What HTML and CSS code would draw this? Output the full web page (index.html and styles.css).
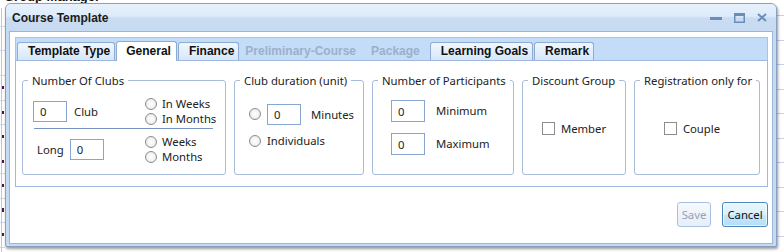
FILE: index.html
```html
<!DOCTYPE html>
<html lang="en">
<head>
    <meta charset="UTF-8">
    <title>Course Template</title>
    <link rel="stylesheet" href="styles.css">
</head>
<body>
    <div class="backdrop">
        <div class="backdrop-title">Group Manager</div>
        <div class="backdrop-left"></div>
        <div class="backdrop-marks"></div>
        <div class="backdrop-right"></div>
    </div>

    <div class="window">
        <div class="titlebar">
            <span class="title">Course Template</span>
            <div class="controls">
                <svg class="ctl" width="12" height="10" viewBox="0 0 12 10"><rect x="0" y="4" width="12" height="3"/></svg>
                <svg class="ctl" width="11" height="10" viewBox="0 0 11 10"><rect x="0" y="0" width="11" height="3"/><rect x="0.75" y="0.75" width="9.5" height="8.5" fill="none" stroke-width="1.5"/></svg>
                <svg class="ctl" width="10" height="9" viewBox="0 0 10 9"><path d="M1 1L9 8M9 1L1 8" fill="none" stroke-width="2"/></svg>
            </div>
        </div>

        <div class="panel">
            <div class="tabs">
                <div class="tab">Template Type</div>
                <div class="tab active">General</div>
                <div class="tab">Finance</div>
                <div class="tab disabled">Preliminary-Course</div>
                <div class="tab disabled">Package</div>
                <div class="tab">Learning Goals</div>
                <div class="tab">Remark</div>
            </div>

            <div class="tab-body">
                <fieldset class="group g-clubs">
                    <legend>Number Of Clubs</legend>
                    <div class="clubs-row first">
                        <div class="clubs-left">
                            <input class="num" type="text" value="0">
                            <span class="club-label">Club</span>
                        </div>
                        <div class="radio-col">
                            <label class="opt"><input class="radio" type="radio" name="per">In Weeks</label>
                            <label class="opt"><input class="radio" type="radio" name="per">In Months</label>
                        </div>
                    </div>
                    <div class="sep"></div>
                    <div class="clubs-row second">
                        <div class="clubs-left">
                            <span class="long-label">Long</span>
                            <input class="num" type="text" value="0">
                        </div>
                        <div class="radio-col">
                            <label class="opt"><input class="radio" type="radio" name="len">Weeks</label>
                            <label class="opt"><input class="radio" type="radio" name="len">Months</label>
                        </div>
                    </div>
                </fieldset>

                <fieldset class="group g-duration">
                    <legend>Club duration (unit)</legend>
                    <div class="dur-row first">
                        <input class="radio" type="radio" name="unit">
                        <input class="num" type="text" value="0">
                        <span class="dur-label">Minutes</span>
                    </div>
                    <label class="dur-row second"><input class="radio" type="radio" name="unit">Individuals</label>
                </fieldset>

                <fieldset class="group g-participants">
                    <legend>Number of Participants</legend>
                    <div class="part-row first">
                        <input class="num tall" type="text" value="0">
                        <span class="part-label">Minimum</span>
                    </div>
                    <div class="part-row second">
                        <input class="num tall" type="text" value="0">
                        <span class="part-label">Maximum</span>
                    </div>
                </fieldset>

                <fieldset class="group g-discount">
                    <legend>Discount Group</legend>
                    <label class="check-body"><input class="check" type="checkbox">Member</label>
                </fieldset>

                <fieldset class="group g-registration">
                    <legend>Registration only for</legend>
                    <label class="check-body shifted"><input class="check" type="checkbox">Couple</label>
                </fieldset>
            </div>

            <div class="actions">
                <button class="btn btn-save" disabled>Save</button>
                <button class="btn btn-cancel">Cancel</button>
            </div>
        </div>
    </div>
</body>
</html>
```

FILE: styles.css
```css
body {
    margin: 0;
    width: 784px;
    height: 252px;
    overflow: hidden;
    position: relative;
    background: #fff;
    font-family: "Noto Sans", "Open Sans", sans-serif;
    font-size: 11.3px;
    color: #222;
}

/* page behind the dialog */
.backdrop {
    position: absolute;
    inset: 0;
}
.backdrop-title {
    position: absolute;
    left: 4px;
    top: -11px;
    font: bold 13px "Liberation Sans", Arial, sans-serif;
    color: #111;
}
.backdrop-left {
    position: absolute;
    left: 0;
    top: 8px;
    width: 5px;
    height: 244px;
    background:
        linear-gradient(to right, transparent 1px, #b9c8de 1px, #b9c8de 2px, transparent 2px),
        repeating-linear-gradient(to bottom, transparent 0, transparent 18px, #cfd9e8 18px, #cfd9e8 19px, transparent 19px, transparent 24.5px);
}
.backdrop-marks {
    position: absolute;
    left: 2px;
    top: 65px;
    width: 2px;
    height: 180px;
    background: repeating-linear-gradient(to bottom, transparent 0, transparent 21px, #4a1650 21px, #4a1650 24px, transparent 24px, transparent 24.5px);
}
.backdrop-right {
    position: absolute;
    right: 0;
    top: 0;
    width: 8px;
    height: 252px;
    background: repeating-linear-gradient(to bottom, transparent 0, transparent 15px, #c4d2e6 15px, #c4d2e6 16px, transparent 16px, transparent 24.5px);
}

/* dialog window */
.window {
    position: absolute;
    left: 5px;
    top: 3px;
    width: 770px;
    height: 242px;
    border: 1px solid #8aa0c0;
    border-radius: 6px 6px 2px 2px;
    background: #c6daf1;
    box-shadow: 1px 2px 3px rgba(0, 0, 0, 0.4);
}
.titlebar {
    height: 27px;
    display: flex;
    align-items: center;
    padding: 0 9px 0 6px;
    border-radius: 5px 5px 0 0;
    background: linear-gradient(#e6f1fc 0, #dcebfa 45%, #cadcf2 52%, #c6daf1 100%);
}
.title {
    flex: 1;
    font: bold 12px "Liberation Sans", Arial, sans-serif;
    color: #1b1b1b;
}
.controls {
    display: flex;
    align-items: center;
    gap: 12px;
}
.ctl {
    fill: #6b8dbd;
    stroke: #6b8dbd;
}
.ctl rect:first-child {
    stroke: none;
}

.panel {
    box-sizing: border-box;
    height: 213px;
    margin: 0 3px 2px;
    padding: 5px 4px 0 5px;
    background: #fff;
    border: 1px solid #9cb6db;
}

/* tabs */
.tabs {
    box-sizing: border-box;
    height: 23px;
    display: flex;
    align-items: flex-end;
    padding-left: 1px;
    background: #c3dcf8;
    border: 1px solid #a6c4ea;
    border-bottom: 0;
}
.tab {
    box-sizing: border-box;
    height: 18px;
    padding: 0 4px 0 10px;
    margin-right: 1px;
    border: 1px solid #8eabd4;
    border-bottom: 0;
    border-radius: 3px 3px 0 0;
    background: linear-gradient(#f1f7fe, #d6e7fa);
    font: bold 12px "Liberation Sans", Arial, sans-serif;
    line-height: 17px;
    color: #111;
    white-space: nowrap;
}
.tab.active {
    height: 20px;
    margin-bottom: -1px;
    padding: 0 5px 0 9px;
    position: relative;
    z-index: 1;
    background: #fff;
    line-height: 18px;
}
.tab.disabled {
    padding: 0 8px 0 4px;
    border-color: transparent;
    background: none;
    color: #9cb0c9;
}

.tab-body {
    box-sizing: border-box;
    height: 127px;
    display: flex;
    align-items: flex-start;
    gap: 8px;
    padding: 12px 0 0 6px;
    border: 1px solid #9fb9de;
}

/* group boxes */
.group {
    box-sizing: border-box;
    height: 102px;
    min-width: 0;
    margin: 0;
    padding: 0;
    border: 1px solid #a7bcdc;
    border-radius: 3px;
}
.group legend {
    margin-left: 5px;
    padding: 0 4px;
    line-height: 15px;
}
.g-clubs { width: 204px; }
.g-duration { width: 130px; }
.g-participants { width: 142px; }
.g-discount { width: 104px; }
.g-registration { width: 126px; }

.num {
    box-sizing: border-box;
    width: 34px;
    height: 21px;
    margin: 0;
    padding: 0 0 0 6px;
    border: 1px solid #87a5d3;
    font: inherit;
    color: #222;
    background: #fff;
}
.num.tall {
    height: 22px;
}
.radio {
    appearance: none;
    flex: none;
    width: 12px;
    height: 12px;
    margin: 0;
    border: 1px solid #8c8c8c;
    border-radius: 50%;
    background: radial-gradient(circle, #fff 0, #f2f2f2 55%, #dcdcdc 100%);
}
.check {
    appearance: none;
    flex: none;
    width: 13px;
    height: 13px;
    margin: 0;
    border: 1px solid #8c8c8c;
    background: #fff;
}

.clubs-row {
    display: flex;
    align-items: center;
    height: 30px;
    padding-left: 10px;
}
.clubs-row.first { margin-top: 8px; }
.clubs-row.second { margin-top: 5px; }
.clubs-left {
    width: 112px;
    display: flex;
    align-items: center;
}
.club-label { margin-left: 7px; }
.long-label { margin: 0 6px 0 4px; }
.radio-col {
    display: flex;
    flex-direction: column;
}
.opt {
    display: flex;
    align-items: center;
    gap: 5px;
    height: 15px;
}
.sep {
    width: 179px;
    height: 1px;
    margin: 2px 0 0 11px;
    background: #7695c5;
}

.dur-row {
    display: flex;
    align-items: center;
    gap: 6px;
    padding-left: 14px;
}
.dur-row.first {
    height: 26px;
    margin-top: 13px;
}
.dur-row.second {
    height: 15px;
    margin-top: 6px;
}
.dur-label { margin-left: 4px; }

.part-row {
    display: flex;
    align-items: center;
    height: 22px;
    padding-left: 18px;
}
.part-row.first { margin-top: 12px; }
.part-row.second { margin-top: 11px; }
.part-label {
    margin-left: 11px;
    margin-top: -2px;
}

.check-body {
    height: 80px;
    display: flex;
    align-items: center;
    justify-content: center;
    gap: 6px;
}
.check-body.shifted { padding-right: 10px; }

/* buttons */
.actions {
    display: flex;
    justify-content: flex-end;
    gap: 11px;
    margin-top: 15px;
}
.btn {
    box-sizing: border-box;
    height: 25px;
    margin: 0;
    padding: 0;
    border-radius: 3px;
    font: inherit;
}
.btn-save {
    width: 34px;
    border: 1px solid #a9c0df;
    background: linear-gradient(#f6f9fd, #e6eef8);
    color: #8fa3bc;
}
.btn-cancel {
    width: 46px;
    border: 1px solid #4d87bd;
    background: linear-gradient(#eaf6fd 0, #d9f0fc 50%, #c6e7fb 51%, #b4def6 100%);
    box-shadow: inset 0 0 0 1px rgba(255, 255, 255, 0.6);
    color: #111;
}
```
